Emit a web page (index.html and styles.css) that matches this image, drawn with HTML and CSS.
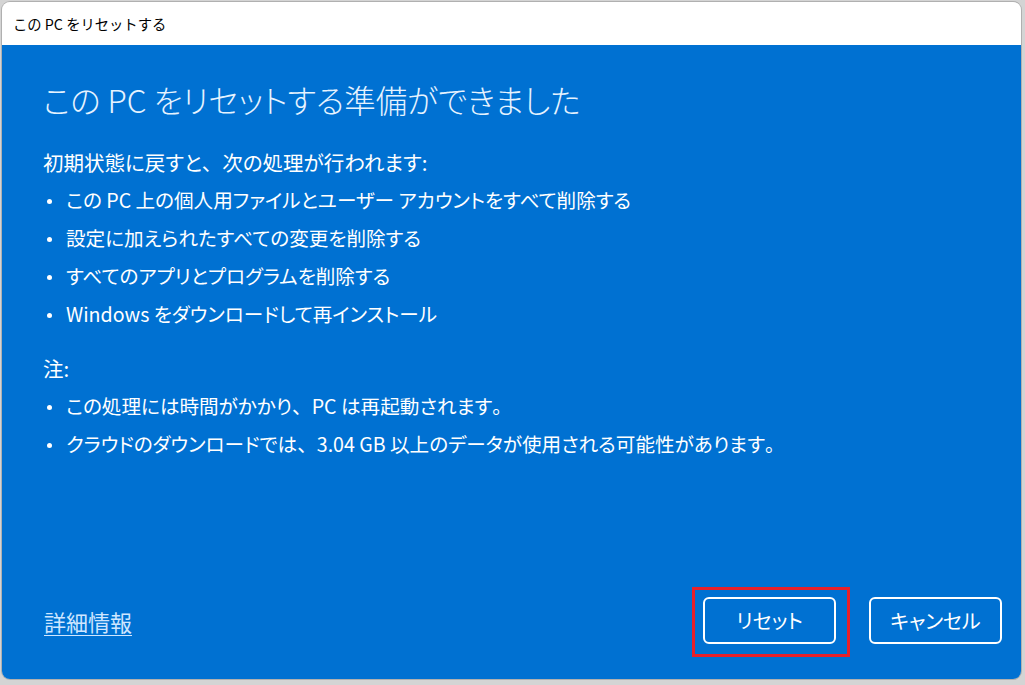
FILE: index.html
```html
<!DOCTYPE html>
<html lang="ja">
<head>
<meta charset="utf-8">
<title>この PC をリセットする</title>
<link rel="stylesheet" href="styles.css">
</head>
<body>
<div class="window">
  <div class="titlebar">この PC をリセットする</div>
  <div class="content">
    <h1 class="heading">この PC をリセットする準備ができました</h1>
    <p class="line">初期状態に戻すと<span class="wide">、</span>次の処理が行われます:</p>
    <ul class="list">
      <li>この PC 上の個人用ファイルとユーザー アカウントをすべて削除する</li>
      <li>設定に加えられたすべての変更を削除する</li>
      <li>すべてのアプリとプログラムを削除する</li>
      <li>Windows をダウンロードして再インストール</li>
    </ul>
    <p class="line note">注:</p>
    <ul class="list">
      <li>この処理には時間がかかり<span class="wide">、</span>PC は再起動されます<span class="wide">。</span></li>
      <li>クラウドのダウンロードでは<span class="wide">、</span>3.04 GB 以上のデータが使用される可能性があります<span class="wide">。</span></li>
    </ul>
    <div class="footer">
      <a class="link" href="#">詳細情報</a>
      <div class="buttons">
        <div class="highlight-wrap">
          <button class="btn">リセット</button>
          <span class="highlight"></span>
        </div>
        <button class="btn">キャンセル</button>
      </div>
    </div>
  </div>
</div>
</body>
</html>
```
FILE: styles.css
```css
html, body {
  margin: 0;
  padding: 0;
}
body {
  width: 1025px;
  height: 685px;
  background: #d4d4d4;
  font-family: "Noto Sans CJK JP", "Noto Sans", sans-serif;
  font-feature-settings: "palt" 1;
  overflow: hidden;
}
.wide {
  font-feature-settings: normal;
}
.window {
  margin: 2px 0 0 2px;
  width: 1019px;
  height: 677px;
  border-radius: 8px;
  overflow: hidden;
  display: flex;
  flex-direction: column;
  box-shadow: 0 0 0 1px #b0b0b0;
}
.titlebar {
  height: 43px;
  background: #ffffff;
  color: #000;
  font-size: 14.3px;
  font-feature-settings: normal;
  line-height: 43px;
  padding-left: 11px;
  flex: none;
}
.content {
  flex: 1;
  background: #0071d2;
  color: #ffffff;
  display: flex;
  flex-direction: column;
  padding: 33px 19px 35px 41px;
}
.heading {
  margin: 0 0 23px 0;
  font-size: 31.5px;
  font-weight: 300;
  line-height: 42px;
  color: #e6f3ff;
}
.line {
  margin: 0;
  font-size: 20.5px;
  line-height: 38px;
}
.note {
  margin-top: 16px;
}
.list {
  margin: 0;
  padding: 0;
  list-style: none;
}
.list li {
  font-size: 19.6px;
  line-height: 38px;
  padding-left: 23px;
  position: relative;
}
.list li::before {
  content: "";
  position: absolute;
  left: 4px;
  top: 18px;
  width: 5px;
  height: 5px;
  border-radius: 50%;
  background: #ffffff;
}
.footer {
  margin-top: auto;
  display: flex;
  align-items: center;
  justify-content: space-between;
}
.link {
  color: #cfe6ff;
  font-size: 22px;
  text-decoration: underline;
  text-underline-offset: 4px;
  text-decoration-thickness: 1px;
  margin-left: 1px;
}
.buttons {
  display: flex;
  gap: 33px;
}
.highlight-wrap {
  position: relative;
}
.btn {
  width: 133px;
  height: 47px;
  box-sizing: border-box;
  border: 2px solid #ffffff;
  border-radius: 6px;
  background: transparent;
  color: #ffffff;
  font-family: "Noto Sans CJK JP", "Noto Sans", sans-serif;
  font-feature-settings: "palt" 1;
  font-size: 20px;
  padding: 0;
}
.highlight {
  position: absolute;
  left: -11px;
  top: -10px;
  right: -14px;
  bottom: -13px;
  border: 3px solid #e8202a;
  pointer-events: none;
}
```
